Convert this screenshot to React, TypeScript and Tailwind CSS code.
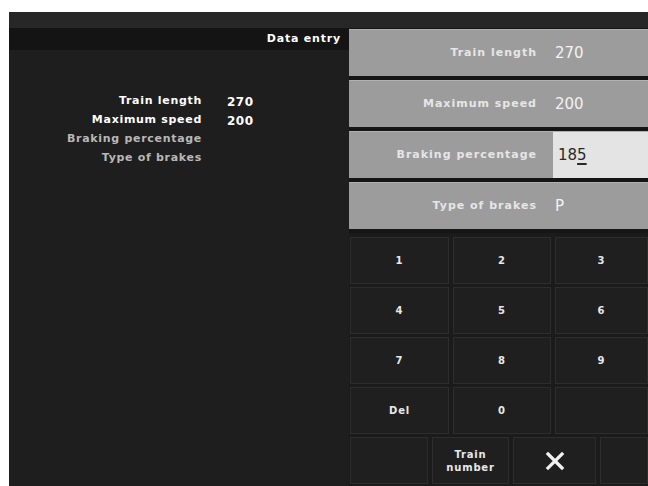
const font = { fontFamily: '"DejaVu Sans", "Liberation Sans", sans-serif' };

type Field = { label: string; value: string; active?: boolean };

const fields: Field[] = [
  { label: 'Train length', value: '270' },
  { label: 'Maximum speed', value: '200' },
  { label: 'Braking percentage', value: '185', active: true },
  { label: 'Type of brakes', value: 'P' },
];

const summary = [
  { label: 'Train length', value: '270', done: true },
  { label: 'Maximum speed', value: '200', done: true },
  { label: 'Braking percentage', value: '', done: false },
  { label: 'Type of brakes', value: '', done: false },
];

const keys = ['1', '2', '3', '4', '5', '6', '7', '8', '9', 'Del', '0', ''];

function Key({ children, className = '' }: { children?: React.ReactNode; className?: string }) {
  return (
    <div
      className={`h-[47px] flex items-center justify-center bg-[#1f1f1f] border border-[#2d2d2d] text-[10px] font-bold text-[#e8e8e8] tracking-[0.8px] ${className}`}
    >
      {children}
    </div>
  );
}

function FieldRow({ field }: { field: Field }) {
  return (
    <div className="h-[47px] flex items-stretch bg-[#9c9c9c] border-t border-[#b0b0b0]">
      <div className="w-[204px] flex items-center justify-end pr-[16px] text-[11px] font-bold text-[#e6e6e6] tracking-[1px]">
        {field.label}
      </div>
      {field.active ? (
        <div className="flex-1 flex items-center pl-[5px] bg-[#e4e4e4] text-[15px] text-[#2a2a2a]">
          18<span className="underline underline-offset-[3px] decoration-2">5</span>
        </div>
      ) : (
        <div className="flex-1 flex items-center pl-[2px] text-[15px] text-[#f2f2f2]">{field.value}</div>
      )}
    </div>
  );
}

export default function App() {
  return (
    <div className="w-[648px] h-[486px] bg-white pt-[12px] pl-[9px] overflow-hidden" style={font}>
      <div className="h-[474px] flex flex-col bg-[#1e1e1e]">
        {/* top status strip */}
        <div className="h-[16px] bg-[#272727]" />

        <div className="flex flex-1">
          {/* left: summary */}
          <div className="w-[340px] flex flex-col">
            <div className="h-[22px] bg-[#141414] flex items-center justify-end pr-[8px] text-[11px] font-bold text-white tracking-[0.8px]">
              Data entry
            </div>
            <div className="pt-[44px] flex flex-col gap-[4px]">
              {summary.map((s) => (
                <div key={s.label} className="flex items-center h-[15px] text-[11px] font-bold tracking-[0.7px]">
                  <div className={`w-[193px] text-right ${s.done ? 'text-white' : 'text-[#b8b8b8]'}`}>{s.label}</div>
                  <div className="pl-[25px] text-[12px] text-white tracking-[0.5px]">{s.value}</div>
                </div>
              ))}
            </div>
          </div>

          {/* right: fields + keypad */}
          <div className="flex-1 flex flex-col bg-[#151515] pt-[1px]">
            <div className="flex flex-col gap-[4px]">
              {fields.map((f) => (
                <FieldRow key={f.label} field={f} />
              ))}
            </div>

            <div className="flex-1 bg-[#1b1b1b] mt-[4px] pt-[4px] pl-[1px] flex flex-col gap-[3px]">
              <div className="grid grid-cols-[99px_98px_1fr] gap-x-[4px] gap-y-[3px]">
                {keys.map((k, i) => (
                  <Key key={i}>{k}</Key>
                ))}
              </div>
              <div className="flex gap-[4px]">
                <Key className="w-[78px]" />
                <Key className="w-[77px] flex-col leading-[13px] text-center">
                  <span>Train</span>
                  <span>number</span>
                </Key>
                <Key className="w-[83px]">
                  <svg width="20" height="20" viewBox="0 0 20 20">
                    <path d="M3 3 L17 17 M17 3 L3 17" stroke="#f2f2f2" strokeWidth="3.2" strokeLinecap="square" />
                  </svg>
                </Key>
                <Key className="flex-1" />
              </div>
            </div>
          </div>
        </div>
      </div>
    </div>
  );
}
